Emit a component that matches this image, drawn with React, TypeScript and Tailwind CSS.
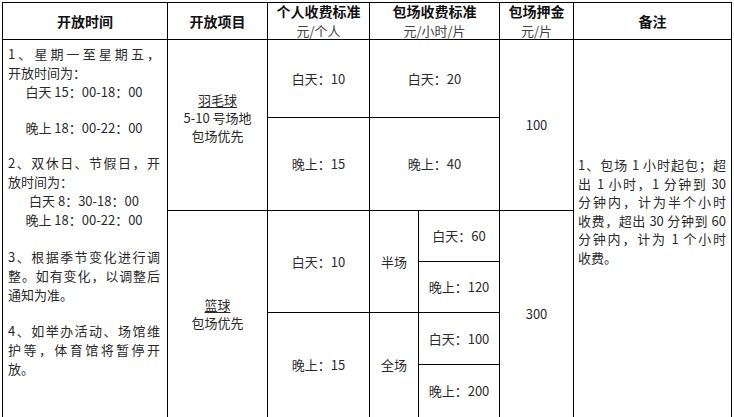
const just = "[text-align:justify] [text-align-last:justify] whitespace-nowrap";

const Head = ({ title, sub, className = "" }: { title: string; sub?: string; className?: string }) => (
  <div className={`bg-white flex flex-col items-center justify-center ${className}`}>
    <div className="text-[14px] leading-[19px] font-bold text-[#111]">{title}</div>
    {sub && <div className="text-[13px] leading-[19px] text-[#444]">{sub}</div>}
  </div>
);

const Cell = ({ children, className = "" }: { children: React.ReactNode; className?: string }) => (
  <div className={`bg-white flex flex-col items-center justify-center text-[13px] leading-[18px] ${className}`}>
    {children}
  </div>
);

const App = () => {
  return (
    <div className="w-[734px] h-[417px] overflow-hidden bg-white pt-[2px] pl-[2px] font-['Noto_Sans_CJK_SC','Liberation_Sans',sans-serif] text-[#2a2a2a]">
      <div className="w-[730px] grid grid-cols-[164px_99px_101px_48px_80px_73px_157px] grid-rows-[36px_77px_92px_50px_50px_51px_52px] gap-px p-px bg-black">
        {/* header */}
        <Head title="开放时间" className="col-start-1 row-start-1" />
        <Head title="开放项目" className="col-start-2 row-start-1" />
        <Head title="个人收费标准" sub="元/个人" className="col-start-3 row-start-1" />
        <Head title="包场收费标准" sub="元/小时/片" className="col-start-4 col-span-2 row-start-1" />
        <Head title="包场押金" sub="元/片" className="col-start-6 row-start-1" />
        <Head title="备注" className="col-start-7 row-start-1" />

        {/* opening hours */}
        <div className="bg-white col-start-1 row-start-2 row-span-6 pl-[5px] pr-[7px] pt-[4px] text-[13px] leading-[19px]">
          <div className={just}>1、星期一至星期五，</div>
          <div>开放时间为：</div>
          <div className="text-center">白天 15：00-18：00</div>
          <div className="text-center mt-[17px]">晚上 18：00-22：00</div>
          <div className={`${just} mt-[16px]`}>2、双休日、节假日，开</div>
          <div>放时间为：</div>
          <div className="text-center">白天 8：30-18：00</div>
          <div className="text-center">晚上 18：00-22：00</div>
          <div className={`${just} mt-[18px]`}>3、根据季节变化进行调</div>
          <div className={just}>整。如有变化，以调整后</div>
          <div>通知为准。</div>
          <div className={`${just} mt-[17px]`}>4、如举办活动、场馆维</div>
          <div className={just}>护等，体育馆将暂停开</div>
          <div>放。</div>
        </div>

        {/* badminton */}
        <Cell className="col-start-2 row-start-2 row-span-2 pb-[15px]">
          <div className="underline underline-offset-2">羽毛球</div>
          <div>5-10 号场地</div>
          <div>包场优先</div>
        </Cell>
        <Cell className="col-start-3 row-start-2">白天：10</Cell>
        <Cell className="col-start-3 row-start-3">晚上：15</Cell>
        <Cell className="col-start-4 col-span-2 row-start-2">白天：20</Cell>
        <Cell className="col-start-4 col-span-2 row-start-3">晚上：40</Cell>
        <Cell className="col-start-6 row-start-2 row-span-2">100</Cell>

        {/* remarks */}
        <div className="bg-white col-start-7 row-start-2 row-span-6 pl-[4px] pr-[5px] pt-[116px] text-[13px] leading-[18.5px]">
          <div className={just}>1、包场 1 小时起包；超</div>
          <div className={just}>出 1 小时，1 分钟到 30</div>
          <div className={just}>分钟内，计为半个小时</div>
          <div className={just}>收费，超出 30 分钟到 60</div>
          <div className={just}>分钟内，计为 1 个小时</div>
          <div>收费。</div>
        </div>

        {/* basketball */}
        <Cell className="col-start-2 row-start-4 row-span-4">
          <div className="underline underline-offset-2">篮球</div>
          <div>包场优先</div>
        </Cell>
        <Cell className="col-start-3 row-start-4 row-span-2">白天：10</Cell>
        <Cell className="col-start-3 row-start-6 row-span-2">晚上：15</Cell>
        <Cell className="col-start-4 row-start-4 row-span-2">半场</Cell>
        <Cell className="col-start-4 row-start-6 row-span-2">全场</Cell>
        <Cell className="col-start-5 row-start-4">白天：60</Cell>
        <Cell className="col-start-5 row-start-5">晚上：120</Cell>
        <Cell className="col-start-5 row-start-6">白天：100</Cell>
        <Cell className="col-start-5 row-start-7">晚上：200</Cell>
        <Cell className="col-start-6 row-start-4 row-span-4">300</Cell>
      </div>
    </div>
  );
};

export default App;
